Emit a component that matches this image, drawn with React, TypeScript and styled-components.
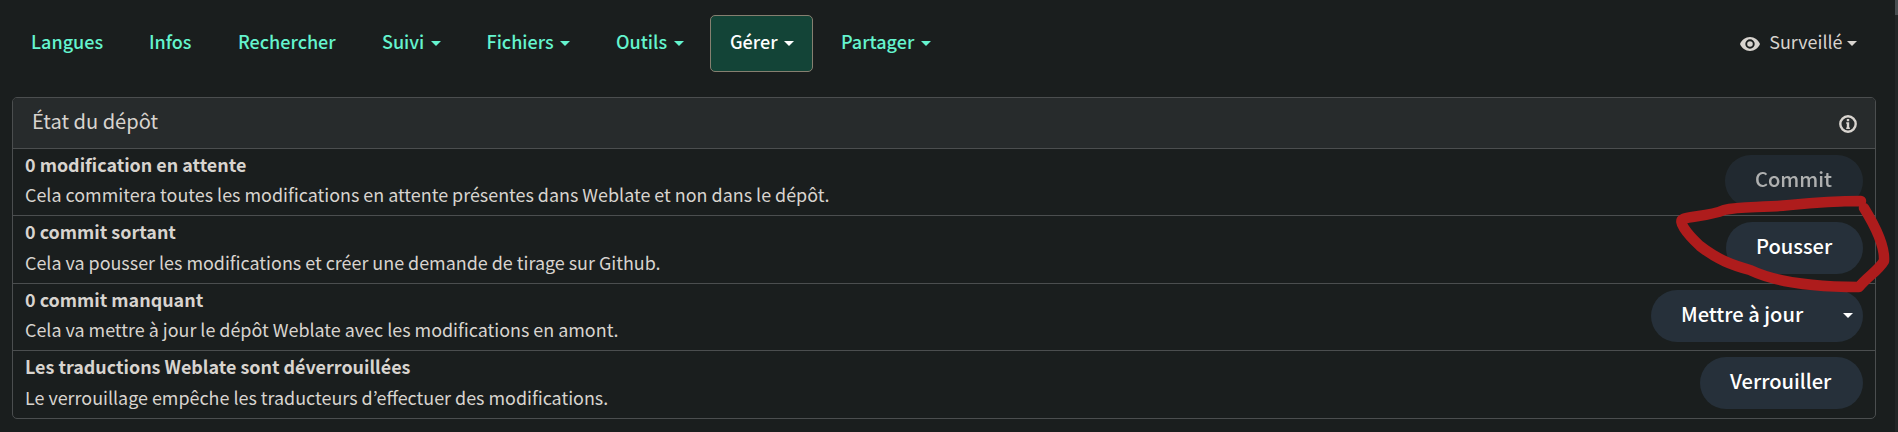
import React from 'react';
import styled, { createGlobalStyle } from 'styled-components';

const Global = createGlobalStyle`
  * { box-sizing: border-box; }
  body { margin: 0; background: #1a1e1e; overflow: hidden; }
`;

const Page = styled.div`
  position: relative;
  width: 1898px;
  height: 432px;
  overflow: hidden;
  background: #1a1e1e;
  color: #d8d4cf;
  font-family: 'Noto Sans CJK KR', 'Noto Sans', sans-serif;
  font-size: 17.92px;
  line-height: 30px;
`;

const NavBar = styled.nav`
  display: flex;
  align-items: flex-start;
  height: 97px;
  padding: 15px 0 0 11px;
`;

const NavItem = styled.a<{ $width: number; $active?: boolean }>`
  display: flex;
  align-items: center;
  flex: none;
  width: ${p => p.$width}px;
  height: 57px;
  margin-right: 8px;
  padding: 0 0 6px 19px;
  border: 1px solid ${p => (p.$active ? '#867f70' : 'transparent')};
  border-radius: 5px;
  background: ${p => (p.$active ? '#134437' : 'transparent')};
  color: ${p => (p.$active ? '#fff' : '#64f4ce')};
  font-size: 18px;
  font-weight: 500;
  white-space: nowrap;
`;

const Caret = styled.i<{ $gap?: number }>`
  margin: 5px 0 0 ${p => p.$gap ?? 6.5}px;
  border: 5px solid transparent;
  border-top-color: currentColor;
  border-bottom: 0;
`;

const Watch = styled.div`
  display: flex;
  align-items: center;
  height: 52px;
  margin-left: auto;
  margin-right: 41px;
  svg { margin: 5px 9.5px 0 0; }
`;

const Panel = styled.section`
  width: 1864px;
  margin-left: 12px;
  border: 1px solid #4b4e4f;
  border-radius: 5px;
  overflow: hidden;
`;

const PanelHeader = styled.header`
  display: flex;
  align-items: center;
  justify-content: space-between;
  height: 50px;
  padding: 0 18px 5px 19px;
  background: #272b2c;
  font-size: 20.1px;
  svg { margin-top: 7px; }
`;

const Row = styled.div<{ $height: number }>`
  display: flex;
  justify-content: space-between;
  height: ${p => p.$height}px;
  padding: 6px 12px 0;
  border-top: 1px solid #4b4e4f;
`;

const Title = styled.div`
  margin-top: -6px;
  font-weight: 700;
`;

const Description = styled.div<{ $gap: number }>`
  margin-top: ${p => p.$gap}px;
`;

const Button = styled.button<{ $width: number }>`
  display: flex;
  align-items: center;
  width: ${p => p.$width}px;
  height: 52px;
  padding: 0 0 6px 30px;
  border: 0;
  border-radius: 26px;
  background: #26303a;
  color: #fff;
  font: 500 20.1px 'Noto Sans CJK KR', 'Noto Sans', sans-serif;
  white-space: nowrap;
  &:disabled { opacity: 0.65; }
`;

const ScrollTrack = styled.div`
  position: absolute;
  top: 0;
  right: 0;
  width: 3px;
  height: 100%;
  background: #222627;
`;

const ScrollThumb = styled.div`
  height: 15px;
  background: #484e51;
`;

const Annotation = styled.svg`
  position: absolute;
  left: 1660px;
  top: 180px;
  filter: blur(0.7px);
`;

const tabs = [
  { label: 'Langues', width: 110 },
  { label: 'Infos', width: 81 },
  { label: 'Rechercher', width: 136 },
  { label: 'Suivi', width: 96.5, menu: true },
  { label: 'Fichiers', width: 121.5, menu: true },
  { label: 'Outils', width: 106, menu: true },
  { label: 'Gérer', width: 103, menu: true, active: true },
  { label: 'Partager', width: 130, menu: true },
];

const rows = [
  { title: '0 modification en attente', text: 'Cela commitera toutes les modifications en attente présentes dans Weblate et non dans le dépôt.', action: 'Commit', width: 138, height: 67, disabled: true },
  { title: '0 commit sortant', text: 'Cela va pousser les modifications et créer une demande de tirage sur Github.', action: 'Pousser', width: 137, height: 68 },
  { title: '0 commit manquant', text: 'Cela va mettre à jour le dépôt Weblate avec les modifications en amont.', action: 'Mettre à jour', width: 212, height: 67, menu: true },
  { title: 'Les traductions Weblate sont déverrouillées', text: 'Le verrouillage empêche les traducteurs d’effectuer des modifications.', action: 'Verrouiller', width: 163, height: 68 },
];

export default function App() {
  return (
    <Page lang="fr">
      <Global />
      <NavBar>
        {tabs.map(t => (
          <NavItem key={t.label} $width={t.width} $active={t.active}>
            {t.label}
            {t.menu && <Caret />}
          </NavItem>
        ))}
        <Watch>
          <svg width="20" height="14" viewBox="0 0 20 14">
            <path fillRule="evenodd" fill="currentColor" d="M10 0C5.500 0 1.600 2.900 0 7c1.600 4.100 5.500 7 10 7s8.400-2.900 10-7C18.400 2.900 14.500 0 10 0zm0 11.700a4.700 4.700 0 1 1 0-9.400 4.700 4.700 0 0 1 0 9.400zm0-7.500a2.800 2.800 0 1 0 0 5.600 2.800 2.800 0 0 0 0-5.600z" />
          </svg>
          Surveillé
          <Caret $gap={4.5} />
        </Watch>
      </NavBar>
      <Panel>
        <PanelHeader>
          État du dépôt
          <svg width="18" height="18" viewBox="0 0 18 18">
            <circle cx="9" cy="9" r="7.700" fill="none" stroke="currentColor" strokeWidth="2.400" />
            <path fill="currentColor" d="M7.800 4h2.400v2.200H7.800zM7.200 7.300h3V12.400h.7V14H7.200v-1.600h.6V8.700h-.6z" />
          </svg>
        </PanelHeader>
        {rows.map(r => (
          <Row key={r.title} $height={r.height}>
            <div>
              <Title>{r.title}</Title>
              <Description $gap={r.height - 67}>{r.text}</Description>
            </div>
            <Button $width={r.width} disabled={r.disabled}>
              {r.action}
              {r.menu && <Caret $gap={40} />}
            </Button>
          </Row>
        ))}
      </Panel>
      <ScrollTrack><ScrollThumb /></ScrollTrack>
      <Annotation width="238" height="120" viewBox="1660 180 238 120" fill="none" stroke="#ae1c1c" strokeWidth="10.500" strokeLinecap="round" strokeLinejoin="round">
        <path d="M1861 201C1830 201 1810 203 1790 205C1760 208 1740 206 1724 210C1710 216 1692 216 1683 219C1678 221 1685 232 1700 246C1718 260 1732 265 1750 270C1775 282 1815 287 1859 287C1868 276 1878 271 1884 261C1885 247 1877 229 1864 208" />
      </Annotation>
    </Page>
  );
}
